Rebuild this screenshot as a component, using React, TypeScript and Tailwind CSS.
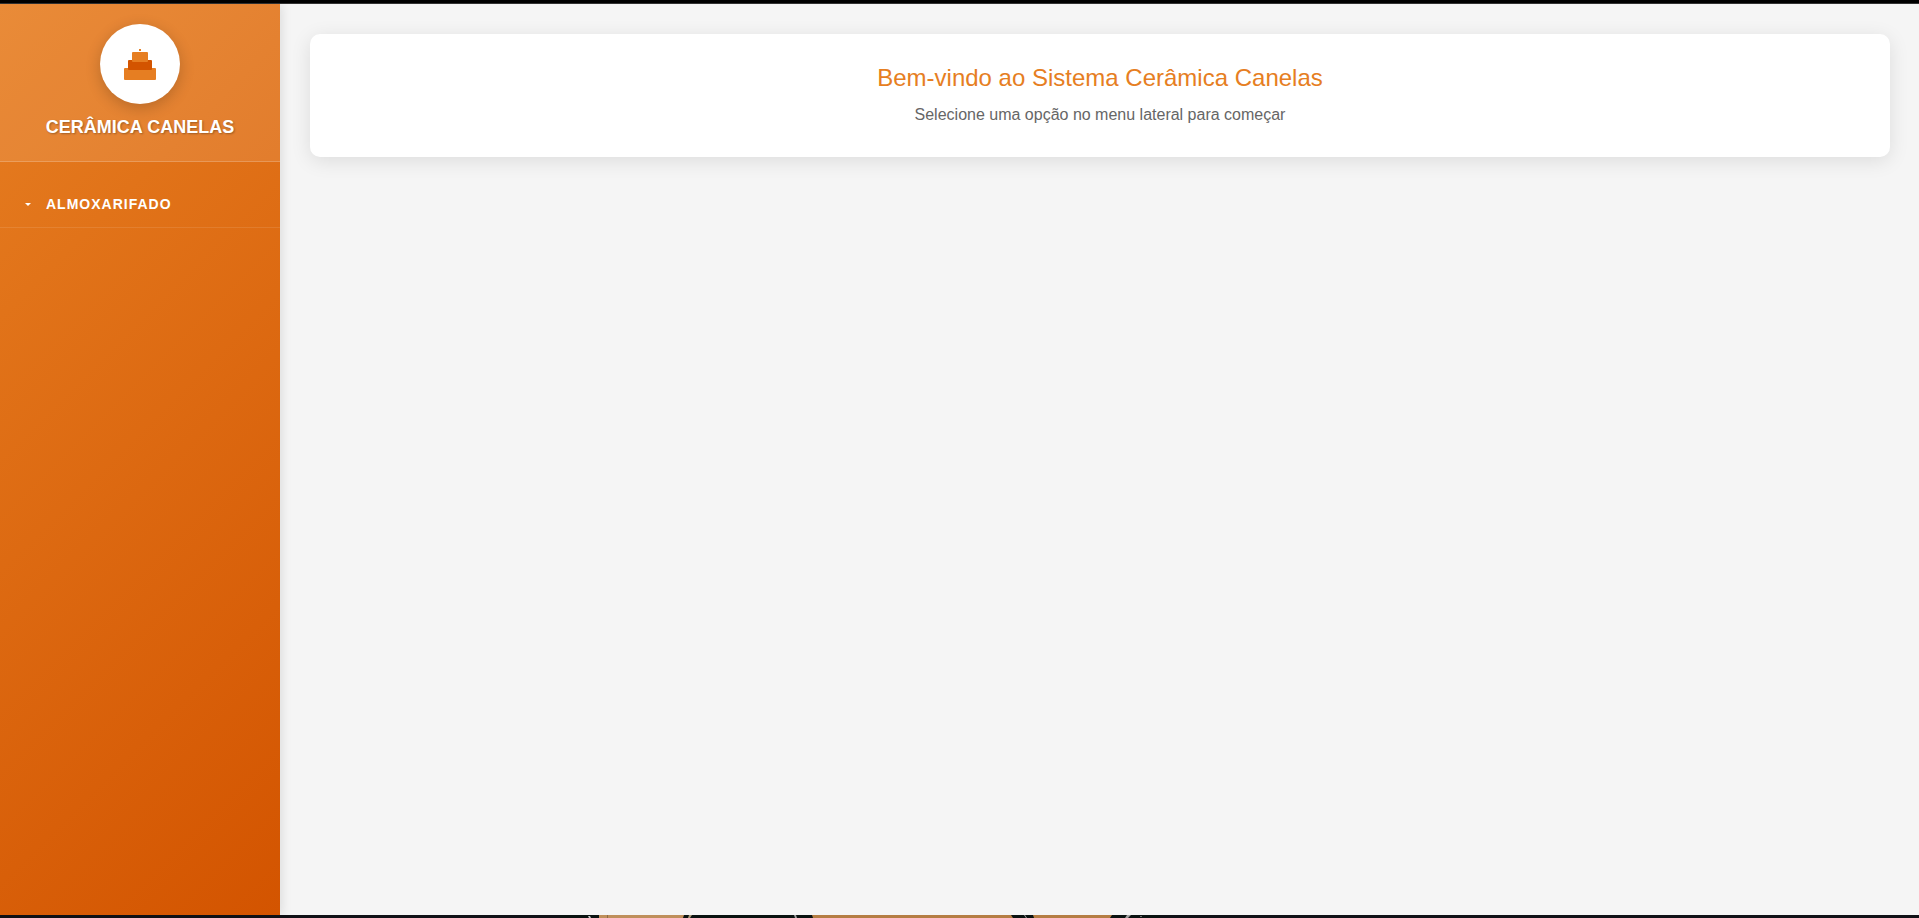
function BrickLogo() {
  return (
    <svg width="40" height="40" viewBox="0 0 40 40" aria-hidden="true">
      <rect x="4" y="24" width="32" height="12" rx="1" fill="#e67e22" />
      <rect x="8" y="16" width="24" height="10" rx="1" fill="#d35400" />
      <rect x="12" y="8" width="16" height="10" rx="1" fill="#e67e22" />
      <rect x="19" y="5" width="2" height="2" fill="#e67e22" />
    </svg>
  );
}

function BottomStrip() {
  return (
    <svg
      className="block h-[3px] w-full shrink-0"
      viewBox="0 0 1919 3"
      preserveAspectRatio="none"
      aria-hidden="true"
    >
      <rect width="1919" height="3" fill="#101116" />
      <rect x="560" width="600" height="3" fill="#0a1210" />
      <path d="M588 1h2l1 2h-2z" fill="#c8c8c8" />
      <path d="M599 0h85l-1 3h-84z" fill="#bf8f5b" />
      <path d="M607 0h1v3h-1z" fill="#8e6a45" />
      <path d="M689 0h3l-2 3h-2z" fill="#a89878" />
      <path d="M794 0h2l1 3h-2z" fill="#a0a0a0" />
      <path d="M812 0h199l2 3h-200z" fill="#b57d43" />
      <path d="M1024 0h1l2 3h-1z" fill="#a0a0a0" />
      <path d="M1033 0h79l-2 3h-76z" fill="#b57d43" />
      <path d="M1127 0h4l-3 3h-3z" fill="#a0a0a0" />
      <path d="M1140 1h2v1h-2z" fill="#707070" />
    </svg>
  );
}

export default function App() {
  return (
    <div className="flex min-h-screen flex-col bg-[#f5f5f5] font-['Liberation_Sans',Arial,sans-serif]">
      <div className="h-1 shrink-0 border-b border-[#333333] bg-black" />
      <div className="flex grow">
        <aside className="z-10 w-[280px] shrink-0 bg-[linear-gradient(135deg,#e67e22_0%,#d35400_100%)] shadow-[2px_0_10px_rgba(0,0,0,0.1)]">
          <header className="flex flex-col items-center border-b border-white/20 bg-white/10 px-5 pt-5 pb-5">
            <div className="flex size-20 items-center justify-center rounded-full bg-white shadow-[0_4px_15px_rgba(0,0,0,0.2)]">
              <BrickLogo />
            </div>
            <div className="mt-[10px] text-lg leading-[27px] font-bold text-white [text-shadow:1px_1px_2px_rgba(0,0,0,0.3)]">
              CERÂMICA CANELAS
            </div>
          </header>
          <nav className="py-5">
            <button
              type="button"
              className="flex w-full items-center gap-[15px] border-b border-white/10 py-[14px] pr-5 pl-[25px] text-left text-sm leading-[17px] font-bold tracking-[1px] text-white"
            >
              <svg width="6" height="3" viewBox="0 0 6 3" aria-hidden="true">
                <path d="M0 0h6L3 3z" fill="currentColor" />
              </svg>
              ALMOXARIFADO
            </button>
          </nav>
        </aside>
        <main className="grow py-[30px] pr-[29px] pl-[30px]">
          <section className="rounded-[10px] bg-white p-[30px] text-center shadow-[0_4px_20px_rgba(0,0,0,0.1)]">
            <h1 className="mb-3 text-2xl leading-[27px] text-[#e67e22]">
              Bem-vindo ao Sistema Cerâmica Canelas
            </h1>
            <p className="text-base leading-6 text-[#666666]">
              Selecione uma opção no menu lateral para começar
            </p>
          </section>
        </main>
      </div>
      <BottomStrip />
    </div>
  );
}
